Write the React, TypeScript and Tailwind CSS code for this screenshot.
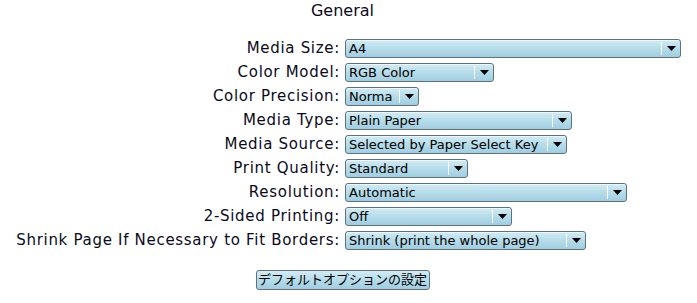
const rows: { label: string; value: string; width: number }[] = [
  { label: 'Media Size:', value: 'A4', width: 336 },
  { label: 'Color Model:', value: 'RGB Color', width: 149 },
  { label: 'Color Precision:', value: 'Norma', width: 74 },
  { label: 'Media Type:', value: 'Plain Paper', width: 227 },
  { label: 'Media Source:', value: 'Selected by Paper Select Key', width: 222 },
  { label: 'Print Quality:', value: 'Standard', width: 123 },
  { label: 'Resolution:', value: 'Automatic', width: 282 },
  { label: '2-Sided Printing:', value: 'Off', width: 167 },
  { label: 'Shrink Page If Necessary to Fit Borders:', value: 'Shrink (print the whole page)', width: 241 },
];

const FakeSelect = ({ value, width }: { value: string; width: number }) => (
  <div
    className="flex h-[19px] items-center rounded-[3px] border border-[#5d717f] bg-gradient-to-b from-[#d3ebf4] via-[#b5dcea] to-[#a2cde0] shadow-[inset_0_1px_0_#eef8fc]"
    style={{ width }}
  >
    <span className="mr-[6px] flex-1 overflow-hidden whitespace-nowrap pl-[3px] text-[13px] leading-[17px] text-black">
      {value}
    </span>
    <span className="h-[13px] w-px bg-white" />
    <span className="flex w-[18px] items-center justify-center">
      <svg width="9" height="5" viewBox="0 0 9 5">
        <path d="M0 0h9L4.5 5z" fill="#000" />
      </svg>
    </span>
  </div>
);

export default function App() {
  return (
    <div className="h-[303px] w-[697px] bg-white font-['DejaVu_Sans',sans-serif] text-[#0a0a1a]">
      <div className="pt-[1px] pr-[12px] text-center text-[16px] leading-[20px]">General</div>
      <div className="mt-[18px] grid grid-cols-[340px_auto] gap-x-[5px] gap-y-[5px]">
        {rows.map((r) => (
          <div key={r.label} className="contents">
            <div className="flex h-[19px] items-center justify-end whitespace-nowrap text-[15px] tracking-[0.7px]">
              {r.label}
            </div>
            <FakeSelect value={r.value} width={r.width} />
          </div>
        ))}
      </div>
      <div className="mt-[20px] flex justify-center pr-[12px]">
        <button
          type="button"
          className="h-[20px] w-[174px] rounded-[3px] border border-[#5d717f] bg-gradient-to-b from-[#d3ebf4] via-[#b5dcea] to-[#a2cde0] font-['DejaVu_Sans','Noto_Sans_CJK_JP',sans-serif] text-[13px] leading-[18px] text-black"
        >
          デフォルトオプションの設定
        </button>
      </div>
    </div>
  );
}
